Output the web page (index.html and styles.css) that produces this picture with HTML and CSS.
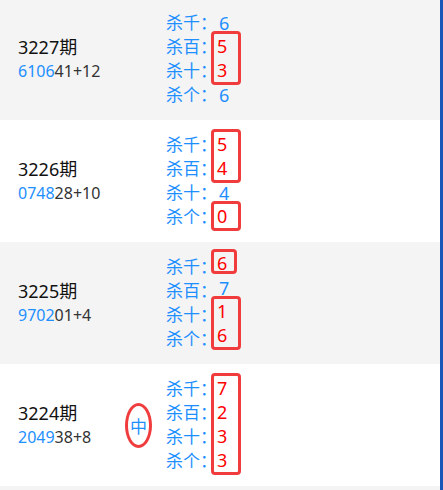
FILE: index.html
```html
<!DOCTYPE html>
<html lang="zh-CN">
<head>
  <meta charset="UTF-8">
  <meta name="viewport" content="width=device-width, initial-scale=1.0">
  <title>杀号</title>
  <link rel="stylesheet" href="styles.css">
</head>
<body>
  <div class="list">
    <div class="item">
      <div class="info">
        <div class="issue">3227期</div>
        <div class="code"><span class="hl">6106</span>41+12</div>
      </div>
      <div class="mark"></div>
      <div class="kill">
        <div class="labels">
          <div>杀千：</div><div>杀百：</div><div>杀十：</div><div>杀个：</div>
        </div>
        <div class="values">
          <div class="val">6</div>
          <div class="box"><div class="val">5</div><div class="val">3</div></div>
          <div class="val">6</div>
        </div>
      </div>
    </div>

    <div class="item">
      <div class="info">
        <div class="issue">3226期</div>
        <div class="code"><span class="hl">0748</span>28+10</div>
      </div>
      <div class="mark"></div>
      <div class="kill">
        <div class="labels">
          <div>杀千：</div><div>杀百：</div><div>杀十：</div><div>杀个：</div>
        </div>
        <div class="values">
          <div class="box"><div class="val">5</div><div class="val">4</div></div>
          <div class="val">4</div>
          <div class="box"><div class="val">0</div></div>
        </div>
      </div>
    </div>

    <div class="item">
      <div class="info">
        <div class="issue">3225期</div>
        <div class="code"><span class="hl">9702</span>01+4</div>
      </div>
      <div class="mark"></div>
      <div class="kill">
        <div class="labels">
          <div>杀千：</div><div>杀百：</div><div>杀十：</div><div>杀个：</div>
        </div>
        <div class="values">
          <div class="box small"><div class="val">6</div></div>
          <div class="val">7</div>
          <div class="box"><div class="val">1</div><div class="val">6</div></div>
        </div>
      </div>
    </div>

    <div class="item">
      <div class="info">
        <div class="issue">3224期</div>
        <div class="code"><span class="hl">2049</span>38+8</div>
      </div>
      <div class="mark"><span class="hit">中</span></div>
      <div class="kill">
        <div class="labels">
          <div>杀千：</div><div>杀百：</div><div>杀十：</div><div>杀个：</div>
        </div>
        <div class="values">
          <div class="box"><div class="val">7</div><div class="val">2</div><div class="val">3</div><div class="val">3</div></div>
        </div>
      </div>
    </div>

    <div class="item"></div>
  </div>
</body>
</html>
```

FILE: styles.css
```css
body {
  margin: 0;
  font-family: "Noto Sans", "Noto Sans CJK SC", sans-serif;
  background-color: #fff;
  overflow: hidden;
}

.list {
  width: 440px;
  height: 492px;
  overflow: hidden;
  border-right: 3px solid #1a56b8;
  margin-top: -2px;
}

.item {
  display: flex;
  align-items: center;
  height: 122px;
  padding-left: 18px;
}

.item:nth-child(odd) {
  background-color: #f4f4f4;
}

.info {
  width: 107px;
}

.issue {
  font-size: 18px;
  line-height: 24px;
  color: #111;
}

.code {
  font-size: 16px;
  line-height: 24px;
  color: #333;
}

.hl {
  color: #1e8fff;
}

.mark {
  width: 41px;
}

.hit {
  display: flex;
  align-items: center;
  justify-content: center;
  width: 21px;
  height: 39px;
  border: 3px solid #f03c3c;
  border-radius: 50%;
  color: #1e8fff;
  font-size: 17px;
}

.kill {
  display: flex;
  font-size: 17px;
  line-height: 24px;
}

.labels {
  width: 48px;
  white-space: nowrap;
  color: #1e8fff;
}

.values {
  width: 30px;
  font-size: 18px;
  color: #1e8fff;
}

.val {
  height: 24px;
  padding-left: 5px;
}

.box {
  width: 21px;
  padding-left: 3px;
  margin: -4px 0 -2px -3px;
  border: 3px solid #f03c3c;
  border-radius: 4px;
  color: #f00;
}

.box .val {
  padding-left: 0;
}

.box.small {
  width: 17px;
  margin: -6px 0 2px -3px;
  height: 19px;
}

.box.small .val {
  height: 19px;
  line-height: 22px;
}
```
